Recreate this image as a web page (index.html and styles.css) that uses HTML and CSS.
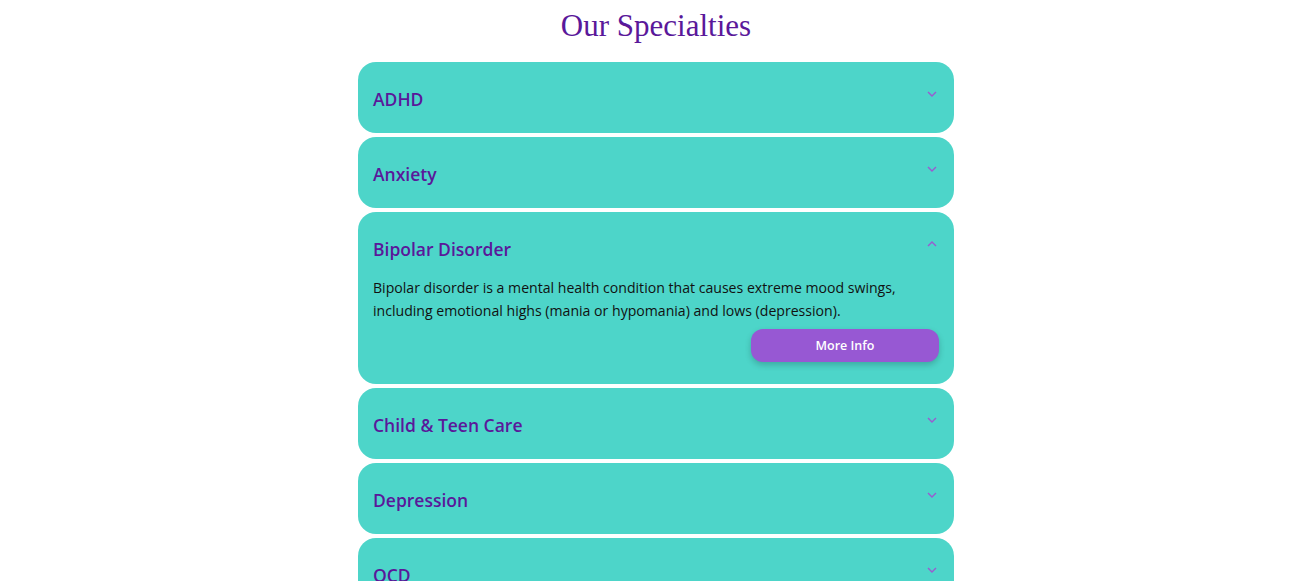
FILE: index.html
```html
<!DOCTYPE html>
<html lang="en">
<head>
<meta charset="utf-8">
<title>Our Specialties</title>
<link rel="stylesheet" href="styles.css">
</head>
<body>
<main class="page">
  <h1 class="title">Our Specialties</h1>
  <div class="accordion">
    <div class="item">
      <div class="item-head"><span class="item-title">ADHD</span><svg class="chev" viewBox="0 0 10 6"><path d="M1 1 L5 5 L9 1"/></svg></div>
    </div>
    <div class="item">
      <div class="item-head"><span class="item-title">Anxiety</span><svg class="chev" viewBox="0 0 10 6"><path d="M1 1 L5 5 L9 1"/></svg></div>
    </div>
    <div class="item open">
      <div class="item-head"><span class="item-title">Bipolar Disorder</span><svg class="chev" viewBox="0 0 10 6"><path d="M1 5 L5 1 L9 5"/></svg></div>
      <div class="item-body">
        <p class="desc">Bipolar disorder is a mental health condition that causes extreme mood swings, including emotional highs (mania or hypomania) and lows (depression).</p>
        <div class="actions"><button class="more">More Info</button></div>
      </div>
    </div>
    <div class="item">
      <div class="item-head"><span class="item-title">Child &amp; Teen Care</span><svg class="chev" viewBox="0 0 10 6"><path d="M1 1 L5 5 L9 1"/></svg></div>
    </div>
    <div class="item">
      <div class="item-head"><span class="item-title">Depression</span><svg class="chev" viewBox="0 0 10 6"><path d="M1 1 L5 5 L9 1"/></svg></div>
    </div>
    <div class="item">
      <div class="item-head"><span class="item-title">OCD</span><svg class="chev" viewBox="0 0 10 6"><path d="M1 1 L5 5 L9 1"/></svg></div>
    </div>
  </div>
</main>
</body>
</html>
```

FILE: styles.css
```css
html, body {
  margin: 0;
  padding: 0;
  background: #ffffff;
}
.page {
  width: 596px;
  margin: 0 auto;
  padding: 6px 0 0 4px;
}
.title {
  margin: 0 0 16px;
  text-align: center;
  font-family: "Liberation Serif", "Times New Roman", serif;
  font-weight: 400;
  font-size: 31px;
  line-height: 40px;
  color: #5a189a;
}
.accordion {
  display: flex;
  flex-direction: column;
  gap: 4px;
}
.item {
  background: #4dd5c9;
  border-radius: 18px;
  padding: 15px;
}
.item.open {
  padding-bottom: 22px;
}
.item-head {
  display: flex;
  justify-content: space-between;
  align-items: flex-start;
  height: 37px;
  padding-top: 4px;
}
.item-title {
  font-family: "Open Sans", "Noto Sans", sans-serif;
  font-weight: 600;
  font-size: 17.5px;
  line-height: 37px;
  color: #5a189a;
}
.chev {
  width: 10px;
  height: 6px;
  margin-top: 10px;
  margin-right: 2px;
  fill: none;
  stroke: #9b59d0;
  stroke-width: 1.4;
}
.item-body {
  padding-top: 8px;
}
.desc {
  margin: 0;
  font-family: "Open Sans", "Noto Sans", sans-serif;
  font-size: 14.1px;
  line-height: 23px;
  color: #111111;
}
.actions {
  display: flex;
  justify-content: flex-end;
  margin-top: 7px;
}
.more {
  width: 188px;
  height: 33px;
  border: 0;
  border-radius: 12px;
  background: #9758d3;
  color: #ffffff;
  font-family: "Open Sans", "Noto Sans", sans-serif;
  font-weight: 600;
  font-size: 12.5px;
  box-shadow: 0 3px 6px rgba(0, 0, 0, 0.2);
  cursor: pointer;
}
```
